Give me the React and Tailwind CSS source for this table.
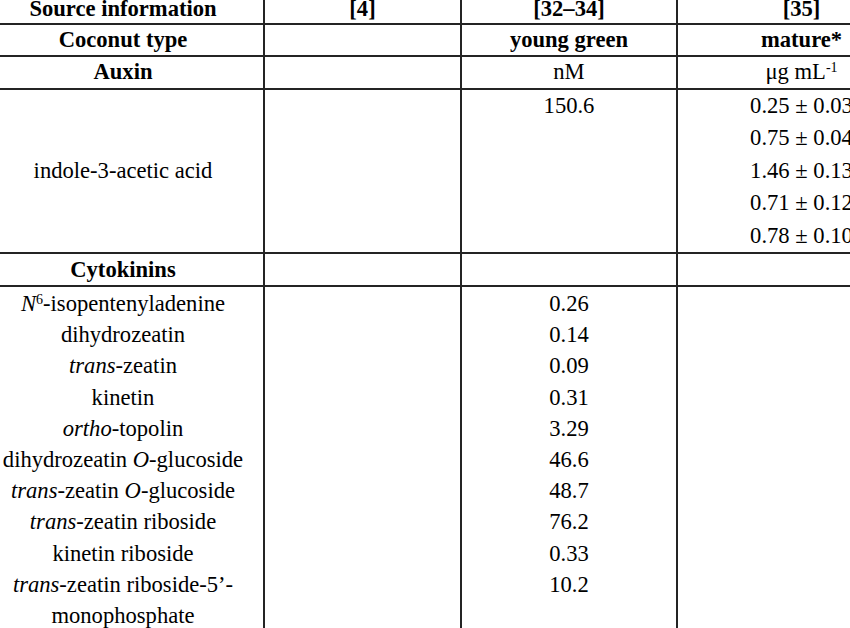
const auxinValues = [
  "0.25 ± 0.03",
  "0.75 ± 0.04",
  "1.46 ± 0.13",
  "0.71 ± 0.12",
  "0.78 ± 0.10",
];

const cytokinins = [
  { name: <><i>N</i><sup className="text-[14px]">6</sup>-isopentenyladenine</>, value: "0.26" },
  { name: "dihydrozeatin", value: "0.14" },
  { name: <><i>trans</i>-zeatin</>, value: "0.09" },
  { name: "kinetin", value: "0.31" },
  { name: <><i>ortho</i>-topolin</>, value: "3.29" },
  { name: <>dihydrozeatin <i>O</i>-glucoside</>, value: "46.6" },
  { name: <><i>trans</i>-zeatin <i>O</i>-glucoside</>, value: "48.7" },
  { name: <><i>trans</i>-zeatin riboside</>, value: "76.2" },
  { name: "kinetin riboside", value: "0.33" },
  { name: <><i>trans</i>-zeatin riboside-5’-<br />monophosphate</>, value: "10.2" },
];

const cell = "border-2 border-[#242424] text-center p-0";

export default function App() {
  return (
    <div className="w-[850px] h-[628px] overflow-hidden bg-white">
      <table className="-mt-[12px] -ml-[19px] w-[944px] table-fixed border-collapse font-['Liberation_Serif',serif] text-[22.6px] leading-[24px] text-black">
        <colgroup>
          <col className="w-[282px]" />
          <col className="w-[197px]" />
          <col className="w-[216px]" />
          <col className="w-[249px]" />
        </colgroup>
        <tbody>
          <tr className="h-[34.5px] font-bold">
            <td className={`${cell} pt-[5px]`}>Source information</td>
            <td className={`${cell} pt-[5px]`}>[4]</td>
            <td className={`${cell} pt-[5px]`}>[32–34]</td>
            <td className={`${cell} pt-[5px]`}>[35]</td>
          </tr>
          <tr className="h-[32.5px] font-bold">
            <td className={cell}>Coconut type</td>
            <td className={cell}></td>
            <td className={cell}>young green</td>
            <td className={cell}>mature*</td>
          </tr>
          <tr className="h-[32.5px]">
            <td className={`${cell} font-bold`}>Auxin</td>
            <td className={cell}></td>
            <td className={cell}>nM</td>
            <td className={cell}>
              μg mL<sup className="text-[14px]">-1</sup>
            </td>
          </tr>
          <tr>
            <td className={`${cell} align-middle`}>indole-3-acetic acid</td>
            <td className={cell}></td>
            <td className={`${cell} align-top leading-[32.6px]`}>150.6</td>
            <td className={`${cell} align-top`}>
              <div className="flex flex-col">
                {auxinValues.map((v) => (
                  <div key={v} className="leading-[32.6px]">
                    {v}
                  </div>
                ))}
              </div>
            </td>
          </tr>
          <tr className="h-[32.5px]">
            <td className={`${cell} font-bold`}>Cytokinins</td>
            <td className={cell}></td>
            <td className={cell}></td>
            <td className={cell}></td>
          </tr>
          <tr>
            <td className={`${cell} align-top pt-[1px] pb-[20px]`}>
              {cytokinins.map((c, i) => (
                <div key={i} className="leading-[31.2px]">
                  {c.name}
                </div>
              ))}
            </td>
            <td className={cell}></td>
            <td className={`${cell} align-top pt-[1px]`}>
              {cytokinins.map((c, i) => (
                <div key={i} className="leading-[31.2px]">
                  {c.value}
                </div>
              ))}
            </td>
            <td className={cell}></td>
          </tr>
        </tbody>
      </table>
    </div>
  );
}
